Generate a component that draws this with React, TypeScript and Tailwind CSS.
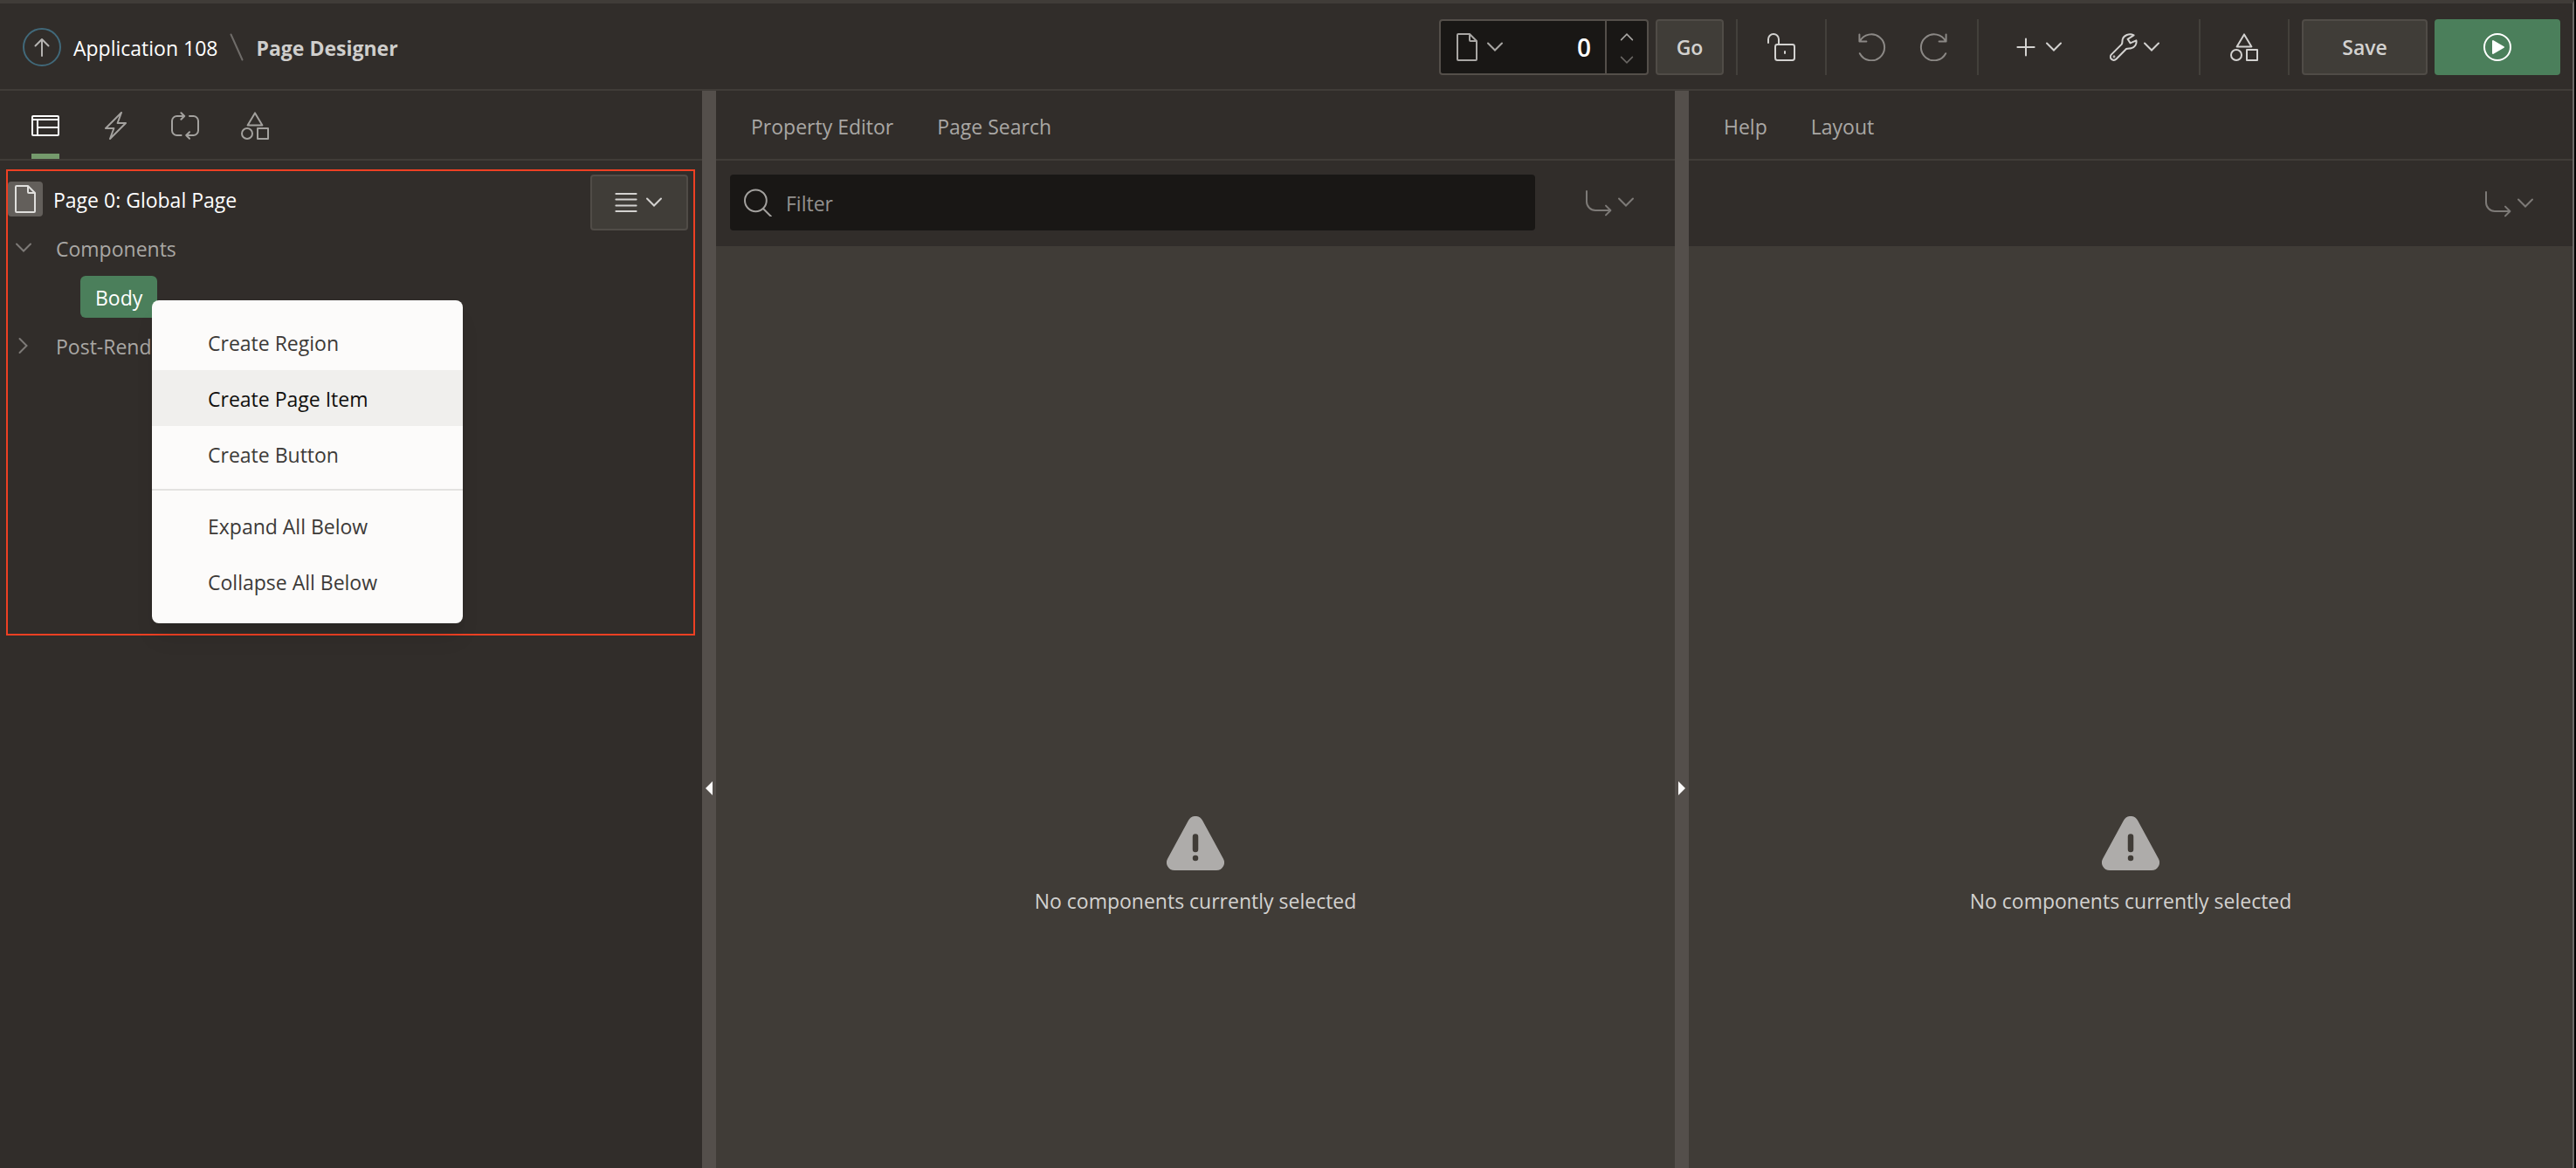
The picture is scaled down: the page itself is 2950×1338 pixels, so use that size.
import type { ReactNode } from "react";

function Icon({ children, className = "" }: { children: ReactNode; className?: string }) {
  return (
    <svg
      viewBox="0 0 16 16"
      fill="none"
      stroke="currentColor"
      strokeLinejoin="round"
      strokeLinecap="round"
      aria-hidden="true"
      className={`size-8 shrink-0 ${className}`}
    >
      {children}
    </svg>
  );
}

const FileIcon = () => (
  <Icon>
    <path d="M3 .5h6.500l4 4V15a.5.5 0 0 1-.5.5H3a.5.5 0 0 1-.5-.5V1A.5.5 0 0 1 3 .5ZM9.500.5V4a.5.5 0 0 0 .5.5h3.500" />
  </Icon>
);

const ShapesIcon = () => (
  <Icon>
    <path d="M8 .7l4.200 7H3.800Z" />
    <circle cx="3.500" cy="12.500" r="3" />
    <path d="M9.500 9.500h6v6h-6Z" />
  </Icon>
);

const JumpIcon = () => (
  <Icon>
    <path d="M1.500 1.500v6a5 5 0 0 0 5 5H15M12.500 9.800l2.700 2.700-2.700 2.700" />
  </Icon>
);

function Chevron({ className = "" }: { className?: string }) {
  return (
    <svg
      viewBox="0 0 20 12"
      fill="none"
      stroke="currentColor"
      strokeWidth="2"
      strokeLinecap="round"
      aria-hidden="true"
      className={`h-3 w-5 shrink-0 ${className}`}
    >
      <path d="M2 1.500l8 8 8-8" />
    </svg>
  );
}

const Divider = () => <div className="h-16 w-0.5 shrink-0 bg-[#43403b]" />;

function Header() {
  return (
    <header className="flex shrink-0 items-center justify-between border-b-2 border-[#403c38] pt-[18px] pr-3.5 pb-4 pl-[26px]">
      <nav aria-label="Breadcrumb" className="flex items-center">
        <a href="#app" className="flex items-center gap-3.5 text-white">
          <span className="flex size-11 items-center justify-center rounded-full border-2 border-[#41697a] text-[#b5b3b1]">
            <svg viewBox="0 0 20 24" fill="none" stroke="currentColor" strokeWidth="2" strokeLinecap="round" strokeLinejoin="round" className="h-6 w-5" aria-hidden="true">
              <path d="M10 22V3M2.500 10.500 10 3l7.500 7.500" />
            </svg>
          </span>
          <span className="pt-0.5 font-medium">Application 108</span>
        </a>
        <svg viewBox="0 0 16 32" stroke="#6f6c69" strokeWidth="2" strokeLinecap="round" className="mx-3.5 h-8 w-4" aria-hidden="true">
          <path d="M1.500 1.500l13 29" />
        </svg>
        <h1 className="pt-0.5 font-bold text-[#cfcecc]">Page Designer</h1>
      </nav>

      <div className="flex items-center">
        <div className="flex h-16 w-60 overflow-hidden rounded-sm border-2 border-[#544f4a] bg-[#191715] text-[#a9a7a4]">
          <button type="button" aria-label="Pages" className="flex items-center gap-1.5 pl-3.5">
            <FileIcon />
            <Chevron />
          </button>
          <input
            type="text"
            aria-label="Page number"
            defaultValue="0"
            className="min-w-0 flex-1 bg-transparent pr-4 text-right text-[28px] font-semibold text-white outline-none"
          />
          <div className="flex w-12 flex-col border-l-2 border-[#544f4a]">
            <button type="button" aria-label="Next page" className="flex flex-1 items-center justify-center pt-1">
              <Chevron className="h-2.5! w-4! rotate-180" />
            </button>
            <button type="button" aria-label="Previous page" className="flex flex-1 items-center justify-center pb-0.5 text-[#6a6764]">
              <Chevron className="h-2.5! w-4!" />
            </button>
          </div>
        </div>
        <button type="button" className="mr-3.5 ml-2 h-16 w-[78px] rounded-sm border-2 border-[#504c47] bg-[#403d38] font-semibold text-[#d3d2d0]">
          Go
        </button>
        <Divider />
        <button type="button" aria-label="Unlocked" className="px-[34px] text-[#d3d2d0]">
          <Icon>
            <rect x="4.500" y="6.500" width="11" height="9" rx="1.200" />
            <path d="M.500 5.500V3.500a3 3 0 0 1 6 0v3M10 10.500v1" />
          </Icon>
        </button>
        <Divider />
        <div className="flex gap-[38px] pr-[34px] pl-9 text-[#8b8885]">
          <button type="button" aria-label="Undo">
            <Icon>
              <path d="M.700 .700v4h4M.900 4.700A7.500 7.500 0 1 1 .900 11.600" />
            </Icon>
          </button>
          <button type="button" aria-label="Redo">
            <Icon>
              <path d="M15.300 .700v4h-4M15.100 4.700A7.500 7.500 0 1 0 15.100 11.600" />
            </Icon>
          </button>
        </div>
        <Divider />
        <div className="flex gap-[54px] pr-11 pl-[38px] text-[#d3d2d0]">
          <button type="button" aria-label="Create" className="flex items-center gap-1.5">
            <Icon>
              <path d="M8 3.200v9.600M3.200 8h9.600" />
            </Icon>
            <Chevron />
          </button>
          <button type="button" aria-label="Utilities" className="flex items-center gap-1.5">
            <Icon>
              <path d="M13.800 1.200 10.300 3.400 11.800 5.700 15.200 4.200c.4 2-.8 4-2.900 4.400-.9.200-1.900 0-2.800.4L3.700 14.900A1.900 1.900 0 0 1 1 12.200L6.900 6.300c.5-.9.2-1.900.5-2.900C8 1.200 11.200-.1 13.800 1.200Z" />
              <circle cx="2.500" cy="13.500" r=".200" />
            </Icon>
            <Chevron />
          </button>
        </div>
        <Divider />
        <button type="button" aria-label="Shared components" className="px-[34px] text-[#d3d2d0]">
          <ShapesIcon />
        </button>
        <Divider />
        <button type="button" className="ml-3.5 h-16 w-36 rounded-sm border-2 border-[#504c47] bg-[#403d38] font-semibold text-[#d3d2d0]">
          Save
        </button>
        <button type="button" aria-label="Save and run page" className="ml-2 flex h-16 w-36 items-center justify-center rounded-sm bg-[#4b7f5b] text-white">
          <Icon>
            <circle cx="8" cy="8" r="7.500" />
            <path d="M5.500 4.500v7L11.500 8Z" fill="currentColor" />
          </Icon>
        </button>
      </div>
    </header>
  );
}

const treeTabs: { label: string; icon: ReactNode; active?: boolean }[] = [
  {
    label: "Rendering",
    active: true,
    icon: (
      <Icon>
        <rect x=".500" y="2.500" width="15" height="11" rx=".500" />
        <path d="M.500 4.500h15M3.500 4.500v9M3.500 9h12" />
      </Icon>
    ),
  },
  {
    label: "Dynamic Actions",
    icon: (
      <Icon>
        <path d="M11.500 .500 2.500 9.500h4.700L5 15.500l9-9H9.300Z" />
      </Icon>
    ),
  },
  {
    label: "Processing",
    icon: (
      <Icon>
        <path d="M5.800 13.500H3.300A2.800 2.800 0 0 1 .500 10.700V5.300A2.800 2.800 0 0 1 3.300 2.500h4.200M5.700.600l1.900 1.900-1.900 1.900M10.500 2.500h2.200a2.800 2.800 0 0 1 2.800 2.800v5.400a2.800 2.800 0 0 1-2.800 2.800H8.600M10.500 11.600l-1.900 1.900 1.900 1.900" />
      </Icon>
    ),
  },
  { label: "Page Shared Components", icon: <ShapesIcon /> },
];

const menuGroups = [
  ["Create Region", "Create Page Item", "Create Button"],
  ["Expand All Below", "Collapse All Below"],
];

function ContextMenu() {
  return (
    <div role="menu" className="absolute top-[148px] left-[165px] z-10 w-[356px] rounded-lg bg-[#fcfbfa] pt-4 pb-4 shadow-xl">
      {menuGroups.map((group, i) => (
        <div key={group[0]} role="group" className={i > 0 ? "mt-2 border-t-2 border-[#e3e2e0] pt-2" : ""}>
          {group.map((item) => (
            <button
              key={item}
              type="button"
              role="menuitem"
              className={`block h-16 w-full pt-0.5 pl-16 text-left ${
                item === "Create Page Item" ? "bg-[#f0efed] font-medium text-[#100f0e]" : "text-[#3c3a38]"
              }`}
            >
              {item}
            </button>
          ))}
        </div>
      ))}
    </div>
  );
}

function TreePanel() {
  return (
    <aside className="min-w-0">
      <div role="tablist" className="flex h-20 gap-12 border-b-2 border-[#403c38] pl-9">
        {treeTabs.map((tab) => (
          <button
            key={tab.label}
            type="button"
            role="tab"
            aria-label={tab.label}
            aria-selected={!!tab.active}
            className={`border-b-6 pt-2 ${tab.active ? "border-[#759a6c] text-white" : "border-transparent text-[#a3a19e]"}`}
          >
            {tab.icon}
          </button>
        ))}
      </div>
      <div className="relative mt-2.5 mr-2 ml-[7px] flex min-h-[534px] items-start justify-between border-2 border-[#ee4023] pt-1 pr-1.5">
        <ul role="tree" className="min-w-0 flex-1 text-[#a9a7a4]">
          <li role="treeitem" className="flex h-14 items-center gap-3">
            <span className="flex size-10 items-center justify-center rounded bg-[#635f5b] text-[#e0dfdd]">
              <FileIcon />
            </span>
            <span className="pt-0.5 font-medium text-white">Page 0: Global Page</span>
          </li>
          <li role="treeitem" aria-expanded="true" className="flex h-14 items-center gap-[27px] pl-2">
            <Chevron className="text-[#7d7a77]" />
            <span className="pt-0.5">Components</span>
          </li>
          <li role="treeitem" aria-selected="true" className="flex h-14 items-center pl-[83px]">
            <span className="flex h-12 items-center rounded-md bg-[#4b7f5b] px-[17px] pt-0.5 font-medium text-white">Body</span>
          </li>
          <li role="treeitem" aria-expanded="false" className="flex h-14 items-center gap-[27px] pl-2">
            <Chevron className="-rotate-90 text-[#7d7a77]" />
            <span className="pt-0.5">Post-Rendering</span>
          </li>
        </ul>
        <button
          type="button"
          aria-label="Tree options"
          className="flex h-16 w-28 items-center justify-center gap-1.5 rounded-sm border-2 border-[#504c47] bg-[#403d38] pr-1 text-[#d3d2d0]"
        >
          <Icon>
            <path d="M2.200 3h11.600M2.200 6.300h11.600M2.200 9.700h11.600M2.200 13h11.600" />
          </Icon>
          <Chevron />
        </button>
        <ContextMenu />
      </div>
    </aside>
  );
}

function Splitter({ direction }: { direction: "left" | "right" }) {
  return (
    <div className="flex flex-col items-center bg-[#544f4b]">
      <div className="flex-[791]" />
      <button type="button" aria-label={`Collapse ${direction}`}>
        <svg viewBox="0 0 8 16" fill="#fcfbfa" className={`h-4 w-2 ${direction === "right" ? "rotate-180" : ""}`} aria-hidden="true">
          <path d="M8 0v16L0 8Z" />
        </svg>
      </button>
      <div className="flex-[427]" />
    </div>
  );
}

function TextTabs({ labels }: { labels: string[] }) {
  return (
    <div role="tablist" className="flex h-20 gap-[50px] border-b-2 border-[#403c38] pt-1 pl-10 text-[#a9a7a4]">
      {labels.map((label) => (
        <button key={label} type="button" role="tab" className="font-medium">
          {label}
        </button>
      ))}
    </div>
  );
}

function GoToButton() {
  return (
    <button type="button" aria-label="Go to group" className="flex items-center gap-1.5 text-[#7d7a77]">
      <JumpIcon />
      <Chevron />
    </button>
  );
}

function EmptyMessage() {
  return (
    <div className="flex flex-1 flex-col items-center bg-[#403c37]">
      <div className="flex-[653]" />
      <svg viewBox="0 0 66 62" className="h-[62px] w-[66px]" aria-hidden="true">
        <path fill="#aeacaa" d="M25 4.800a9 9 0 0 1 16 0L64.800 48.500A9 9 0 0 1 57 62H9A9 9 0 0 1 1.200 48.500Z" />
        <path stroke="#403c37" strokeWidth="6.500" strokeLinecap="round" d="M33 23.500v14.500M33 48v.010" />
      </svg>
      <p className="mt-[17px] font-medium text-[#d3d2d0]">No components currently selected</p>
      <div className="flex-[288]" />
    </div>
  );
}

export default function App() {
  return (
    <div className="flex h-screen flex-col overflow-hidden bg-black pr-0.5 font-['Open_Sans','Noto_Sans',sans-serif] text-[23px] leading-9">
      <div className="flex min-h-0 flex-1 flex-col border-t-4 border-r-2 border-t-[#403c38] border-r-[#6b6865] bg-[#312d2a]">
        <Header />
        <main className="grid min-h-0 flex-1 grid-cols-[804px_16px_minmax(0,1098fr)_16px_minmax(0,1012fr)]">
          <TreePanel />
          <Splitter direction="left" />
          <section aria-label="Property Editor" className="flex flex-col">
            <TextTabs labels={["Property Editor", "Page Search"]} />
            <div className="flex items-center py-4 pr-[46px] pb-[18px] pl-4">
              <label className="mr-14 flex h-16 flex-1 items-center gap-4 rounded-sm bg-[#191715] pl-4 text-[#a3a19e]">
                <Icon>
                  <circle cx="6.700" cy="6.900" r="6.200" />
                  <path d="M11 11.500l4.500 4.500" />
                </Icon>
                <input
                  type="text"
                  aria-label="Filter"
                  placeholder="Filter"
                  className="min-w-0 flex-1 bg-transparent pt-0.5 text-white outline-none placeholder:text-[#93918e]"
                />
              </label>
              <GoToButton />
            </div>
            <EmptyMessage />
          </section>
          <Splitter direction="right" />
          <section aria-label="Help" className="flex flex-col">
            <TextTabs labels={["Help", "Layout"]} />
            <div className="flex h-[98px] items-center justify-end pr-11">
              <GoToButton />
            </div>
            <EmptyMessage />
          </section>
        </main>
      </div>
    </div>
  );
}
